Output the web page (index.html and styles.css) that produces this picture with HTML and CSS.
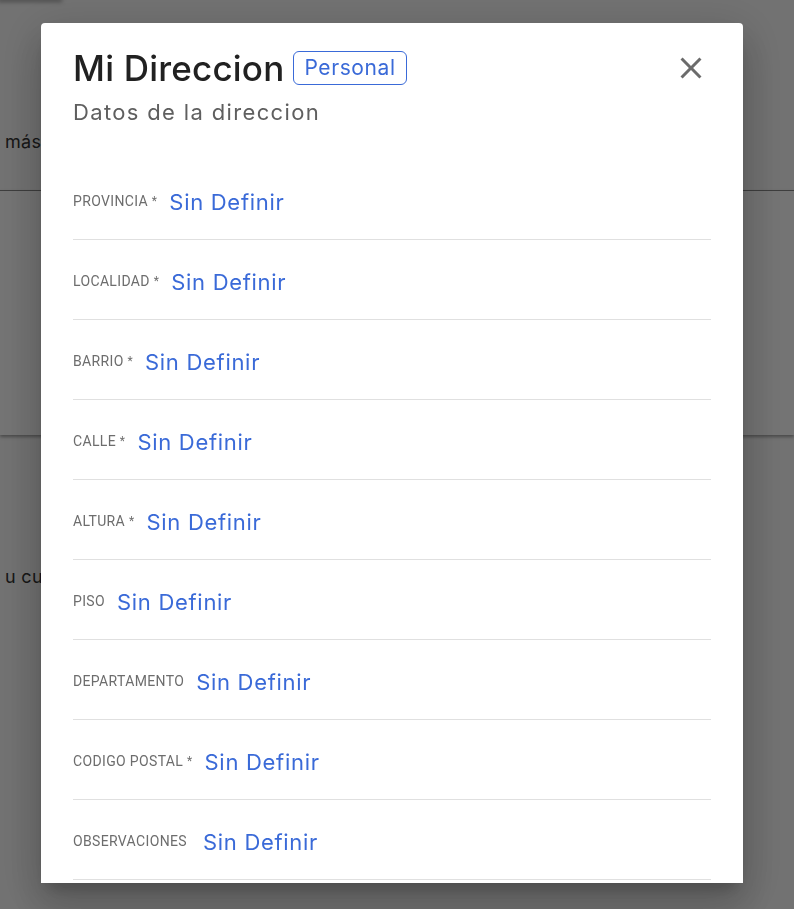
FILE: index.html
```html
<!DOCTYPE html>
<html lang="es">
<head>
<meta charset="utf-8">
<title>Mi Direccion</title>
<link rel="stylesheet" href="styles.css">
</head>
<body>
<div class="page">
  <div class="top-card"></div>
  <p class="bg-text first">más información sobre tu dirección</p>
  <div class="bg-card"></div>
  <p class="bg-text second">u cuenta personal</p>
</div>
<div class="overlay"></div>
<div class="modal">
  <div class="modal-head">
    <div class="title-row">
      <h1 class="title">Mi Direccion</h1>
      <span class="badge">Personal</span>
      <button class="close" aria-label="Cerrar">
        <svg viewBox="0 0 24 24" width="36" height="36"><path d="M19 6.41 17.59 5 12 10.59 6.41 5 5 6.41 10.59 12 5 17.59 6.41 19 12 13.41 17.59 19 19 17.59 13.41 12z" fill="#6b6b6b"/></svg>
      </button>
    </div>
    <p class="subtitle">Datos de la direccion</p>
  </div>
  <ul class="fields">
    <li class="field"><span class="label">PROVINCIA <sup>*</sup></span><span class="value">Sin Definir</span></li>
    <li class="field"><span class="label">LOCALIDAD <sup>*</sup></span><span class="value">Sin Definir</span></li>
    <li class="field"><span class="label">BARRIO <sup>*</sup></span><span class="value">Sin Definir</span></li>
    <li class="field"><span class="label">CALLE <sup>*</sup></span><span class="value">Sin Definir</span></li>
    <li class="field"><span class="label">ALTURA <sup>*</sup></span><span class="value">Sin Definir</span></li>
    <li class="field"><span class="label">PISO</span><span class="value">Sin Definir</span></li>
    <li class="field"><span class="label">DEPARTAMENTO</span><span class="value">Sin Definir</span></li>
    <li class="field"><span class="label">CODIGO POSTAL <sup>*</sup></span><span class="value">Sin Definir</span></li>
    <li class="field"><span class="label wide">OBSERVACIONES</span><span class="value">Sin Definir</span></li>
  </ul>
</div>
</body>
</html>
```

FILE: styles.css
```css
* { box-sizing: border-box; }
html, body { margin: 0; padding: 0; }
body {
  background: #fafafa;
  font-family: "Inter", "Roboto", sans-serif;
  height: 909px;
  overflow: hidden;
}
.page {
  display: flex;
  flex-direction: column;
}
.top-card {
  width: 60px;
  height: 0;
  box-shadow: 0 0 4px 2px rgba(0,0,0,0.35);
}
.bg-text {
  margin: 0;
  font-family: "Inter", sans-serif;
  font-size: 18px;
  color: #333;
  white-space: nowrap;
  padding-left: 5px;
  letter-spacing: 0.3px;
}
.bg-text.first { margin-top: 131px; }
.bg-card {
  margin-top: 38px;
  height: 245px;
  background: #fff;
  border-top: 1px solid #888;
  box-shadow: 0 2px 3px rgba(0,0,0,0.35);
}
.bg-text.second { margin-top: 131px; }
.overlay {
  position: fixed;
  inset: 0;
  background: rgba(0,0,0,0.545);
}
.modal {
  position: fixed;
  left: 41px;
  top: 23px;
  width: 702px;
  height: 860px;
  background: #fff;
  border-radius: 4px 4px 0 0;
  overflow: hidden;
  box-shadow: 0 11px 15px -7px rgba(0,0,0,0.2), 0 24px 38px 3px rgba(0,0,0,0.14), 0 9px 46px 8px rgba(0,0,0,0.12);
  padding: 0 32px;
}
.modal-head {
  padding-top: 23px;
}
.title-row {
  display: flex;
  align-items: center;
  height: 44px;
}
.title {
  margin: 0;
  font-family: "Inter", sans-serif;
  font-weight: 500;
  font-size: 35px;
  line-height: 44px;
  color: #212121;
  letter-spacing: 0.2px;
}
.badge {
  margin-left: 9px;
  border: 1.5px solid #3a6ad8;
  border-radius: 6px;
  color: #3a6ad8;
  font-size: 21px;
  line-height: 32px;
  padding: 0 10px;
  letter-spacing: 0.6px;
}
.close {
  margin-left: auto;
  margin-right: 2px;
  width: 36px;
  height: 36px;
  padding: 0;
  border: 0;
  background: none;
  display: flex;
}
.subtitle {
  margin: 8px 0 0;
  font-size: 22px;
  line-height: 28px;
  color: #5f5f5f;
  letter-spacing: 1.35px;
}
.fields {
  list-style: none;
  margin: 34px 0 0;
  padding: 0;
}
.field {
  display: flex;
  align-items: center;
  gap: 12px;
  height: 80px;
  padding-top: 4px;
  border-bottom: 1px solid #e0e0e0;
}
.label {
  font-family: "Roboto", sans-serif;
  font-size: 14px;
  color: #6d6d6d;
  text-transform: uppercase;
  letter-spacing: 0.35px;
  position: relative;
  top: -1px;
}
.label.wide { margin-right: 4px; }
.label sup {
  font-size: 12px;
  vertical-align: 0;
  position: relative;
  top: -1px;
}
.value {
  font-size: 22px;
  color: #3a6ad8;
  letter-spacing: 0.7px;
}
```
